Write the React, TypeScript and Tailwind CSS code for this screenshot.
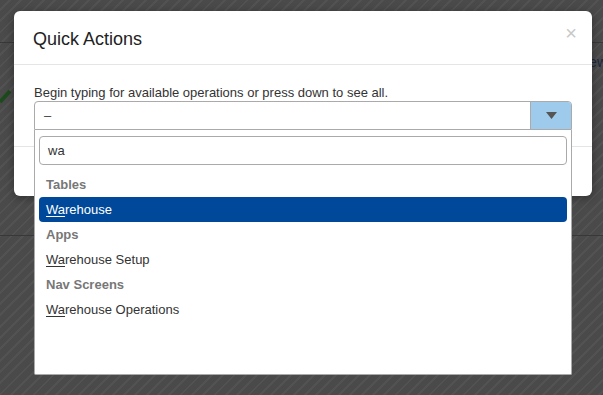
import React from "react";

const font = { fontFamily: '"Liberation Sans", Arial, sans-serif' };

function Hl({ rest }: { rest: string }) {
  return (
    <span>
      <span className="underline underline-offset-[2px]">Wa</span>
      {rest}
    </span>
  );
}

export default function App() {
  return (
    <div
      className="relative w-[603px] h-[395px] overflow-hidden bg-[#4a4a4a] bg-[repeating-linear-gradient(135deg,#4a4a4a_0px,#4a4a4a_6px,#525252_6px,#525252_8px)]"
      style={font}
    >
      {/* background page */}
      <div className="h-[43px] border-b border-[#383838]" />
      <div className="h-[193px] border-b border-[#383838] flex justify-between">
        <svg width="12" height="16" viewBox="0 0 12 16" className="mt-[45px]">
          <path d="M0 14 L10 3" stroke="#1d4a1d" strokeWidth="4" />
        </svg>
        <div className="mt-[11px] mr-[-4px] text-[14px] text-[#1b2740] leading-[16px]">
          New
        </div>
      </div>

      {/* modal */}
      <div className="absolute left-[14px] top-[11px] w-[578px] h-[185px] bg-white rounded-[6px] shadow-[0_2px_8px_rgba(0,0,0,0.35)] flex flex-col">
        <div className="h-[54px] border-b border-[#e5e5e5] flex items-center justify-between pl-[19px] pr-[15px]">
          <div className="text-[18px] text-[#222] leading-[20px] pt-[2px]">Quick Actions</div>
          <div className="text-[20px] text-[#c8c8c8] leading-[20px] mb-[9px]">×</div>
        </div>
        <div className="px-[20px] pt-[20px] pb-[16px] border-b border-[#e5e5e5]">
          <div className="text-[13px] text-[#333] leading-[16px]">
            Begin typing for available operations or press down to see all.
          </div>
          <div className="flex h-[29px] border border-[#aaa] rounded-t-[4px]">
            <div className="flex-1 flex items-center pl-[9px] text-[13px] text-[#444]">–</div>
            <div className="w-[41px] bg-[#9ecbeb] border-l border-[#aaa] rounded-tr-[3px] flex items-center justify-center">
              <svg width="11" height="7" viewBox="0 0 11 7">
                <path d="M0 0 H11 L5.5 7 Z" fill="#555" />
              </svg>
            </div>
          </div>
        </div>
        <div className="flex-1" />
      </div>

      {/* dropdown */}
      <div className="absolute left-[34px] top-[130px] w-[538px] h-[245px] bg-white border border-t-0 border-[#aaa] rounded-b-[2px] px-[4px] pt-[6px]">
        <div className="h-[29px] border border-[#aaa] rounded-[4px] flex items-center pl-[8px] text-[13px] text-[#333]">
          wa
        </div>
        <div className="mt-[7px] text-[13px] leading-[25px]">
          <div className="pl-[7px] font-bold text-[#777]">Tables</div>
          <div className="pl-[7px] bg-[#00499a] text-white rounded-[4px]">
            <Hl rest="rehouse" />
          </div>
          <div className="pl-[7px] font-bold text-[#777]">Apps</div>
          <div className="pl-[7px] text-[#333]">
            <Hl rest="rehouse Setup" />
          </div>
          <div className="pl-[7px] font-bold text-[#777]">Nav Screens</div>
          <div className="pl-[7px] text-[#333]">
            <Hl rest="rehouse Operations" />
          </div>
        </div>
      </div>
    </div>
  );
}
